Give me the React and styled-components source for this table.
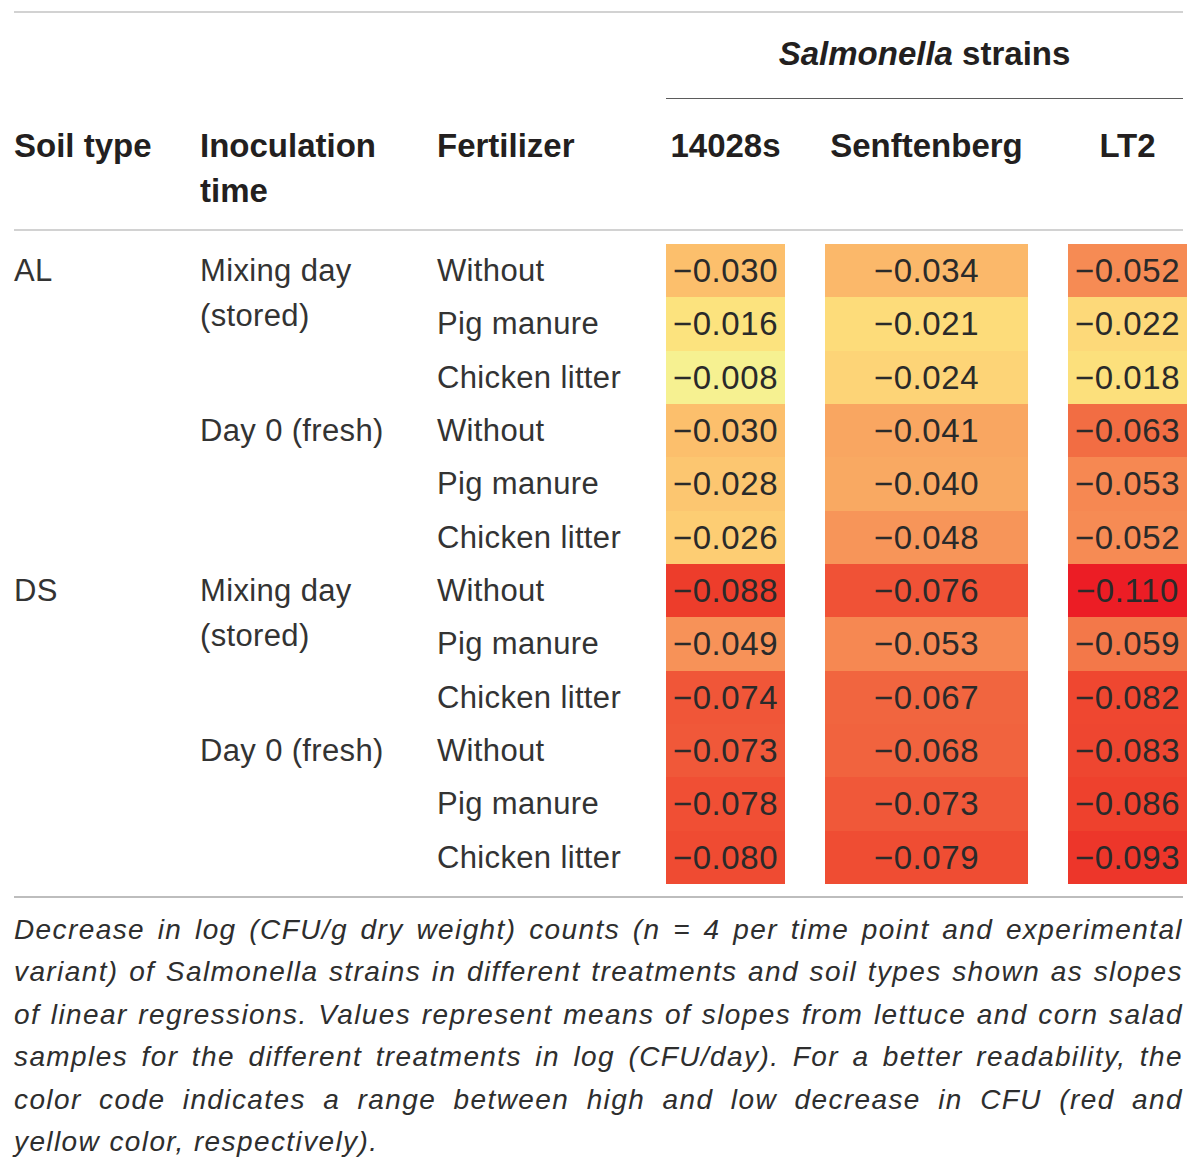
import React from 'react';
import styled, { createGlobalStyle } from 'styled-components';

/* ─────────────────────────────────────────────
   DATA
───────────────────────────────────────────── */
const strains = ['14028s', 'Senftenberg', 'LT2'];

const groups = [
  {
    soil: 'AL',
    times: [
      { label: ['Mixing day', '(stored)'], rows: [
        ['Without', [-0.030, -0.034, -0.052]],
        ['Pig manure', [-0.016, -0.021, -0.022]],
        ['Chicken litter', [-0.008, -0.024, -0.018]],
      ] },
      { label: ['Day 0 (fresh)'], rows: [
        ['Without', [-0.030, -0.041, -0.063]],
        ['Pig manure', [-0.028, -0.040, -0.053]],
        ['Chicken litter', [-0.026, -0.048, -0.052]],
      ] },
    ],
  },
  {
    soil: 'DS',
    times: [
      { label: ['Mixing day', '(stored)'], rows: [
        ['Without', [-0.088, -0.076, -0.110]],
        ['Pig manure', [-0.049, -0.053, -0.059]],
        ['Chicken litter', [-0.074, -0.067, -0.082]],
      ] },
      { label: ['Day 0 (fresh)'], rows: [
        ['Without', [-0.073, -0.068, -0.083]],
        ['Pig manure', [-0.078, -0.073, -0.086]],
        ['Chicken litter', [-0.080, -0.079, -0.093]],
      ] },
    ],
  },
];

const caption = [
  'Decrease in log (CFU/g dry weight) counts (n = 4 per time point and experimental',
  'variant) of Salmonella strains in different treatments and soil types shown as slopes',
  'of linear regressions. Values represent means of slopes from lettuce and corn salad',
  'samples for the different treatments in log (CFU/day). For a better readability, the',
  'color code indicates a range between high and low decrease in CFU (red and',
  'yellow color, respectively).',
];

/* yellow → orange → red scale, keyed on the size of the decrease */
const stops = [
  [0.008, [246, 241, 145]],
  [0.016, [252, 227, 126]],
  [0.021, [253, 220, 122]],
  [0.024, [253, 212, 119]],
  [0.030, [252, 191, 108]],
  [0.034, [251, 184, 106]],
  [0.041, [249, 166, 97]],
  [0.052, [246, 139, 84]],
  [0.063, [242, 109, 67]],
  [0.076, [240, 82, 54]],
  [0.088, [237, 61, 43]],
  [0.110, [236, 29, 37]],
];

const heat = (v) => {
  const a = Math.abs(v);
  if (a <= stops[0][0]) return `rgb(${stops[0][1].join(',')})`;
  for (let i = 1; i < stops.length; i++) {
    const [x1, c1] = stops[i];
    const [x0, c0] = stops[i - 1];
    if (a <= x1) {
      const t = (a - x0) / (x1 - x0);
      const c = c0.map((ch, k) => Math.round(ch + (c1[k] - ch) * t));
      return `rgb(${c.join(',')})`;
    }
  }
  return `rgb(${stops[stops.length - 1][1].join(',')})`;
};

const fmt = (v) => '\u2212' + Math.abs(v).toFixed(3);

/* ─────────────────────────────────────────────
   STYLES
───────────────────────────────────────────── */
const GlobalStyle = createGlobalStyle`
  body {
    margin: 0;
    background: #fff;
    font-family: "Liberation Sans", Arial, sans-serif;
    color: #231f20;
  }
`;

const COLS = '186px 237px 229px 119px 243px 159px';

const Page = styled.div`
  width: 1173px;
  padding: 11px 0 0 14px;
`;

const Rule = styled.div`
  height: 2px;
  margin-right: 4px;
  margin-top: ${p => p.$gap || 0}px;
  background: ${p => p.$tone || '#d2d2d2'};
`;

const HeadGrid = styled.div`
  display: grid;
  grid-template-columns: ${COLS};
  font-size: 33px;
  font-weight: 700;
  line-height: 45px;
`;

const GroupHead = styled.div`
  grid-column: 4 / 7;
  grid-row: 1;
  margin-right: 4px;
  padding: 18px 0 22px;
  text-align: center;
  border-bottom: 1px solid #5b5b5b;
  em { font-style: italic; }
`;

const ColHead = styled.div`
  grid-row: 2;
  grid-column: ${p => p.$col};
  padding: 24px 0 16px;
  text-align: ${p => (p.$center ? 'center' : 'left')};
  margin-left: ${p => (p.$offset ? '40px' : '0')};
`;

const BodyGrid = styled.div`
  display: grid;
  grid-template-columns: ${COLS};
  grid-template-rows: repeat(12, 53.34px);
  padding-top: 13px;
  font-size: 31px;
  letter-spacing: 0.35px;
  line-height: 45px;
  color: #333;
`;

const SpanLabel = styled.div`
  grid-column: ${p => p.$col};
  grid-row: span ${p => p.$span};
  padding-top: 4px;
`;

const Label = styled.div`
  grid-column: 3;
  padding-top: 4px;
  white-space: nowrap;
`;

const HeatCell = styled.div`
  grid-column: ${p => p.$col};
  margin-left: ${p => (p.$offset ? '40px' : '0')};
  display: flex;
  align-items: center;
  justify-content: center;
  background: ${p => heat(p.$value)};
  font-size: 33px;
  letter-spacing: 0.6px;
  color: #2a2a2a;
`;

const Caption = styled.div`
  width: 1169px;
  padding-top: 11px;
  font-size: 28px;
  letter-spacing: 1.4px;
  font-style: italic;
  line-height: 42.4px;
  color: #2e2e2e;
`;

const CaptionLine = styled.div`
  white-space: nowrap;
  text-align: justify;
  text-align-last: ${p => (p.$last ? 'left' : 'justify')};
`;

/* ─────────────────────────────────────────────
   COMPONENT
───────────────────────────────────────────── */
export default function App() {
  return (
    <Page>
      <GlobalStyle />
      <Rule />

      <HeadGrid>
        <GroupHead><em>Salmonella</em> strains</GroupHead>
        <ColHead $col={1}>Soil type</ColHead>
        <ColHead $col={2}>Inoculation<br />time</ColHead>
        <ColHead $col={3}>Fertilizer</ColHead>
        {strains.map((s, i) => (
          <ColHead key={s} $col={4 + i} $center $offset={i > 0}>{s}</ColHead>
        ))}
      </HeadGrid>

      <Rule />

      <BodyGrid>
        {groups.map(g => (
          <React.Fragment key={g.soil}>
            <SpanLabel $col={1} $span={6}>{g.soil}</SpanLabel>
            {g.times.map((t, ti) => (
              <React.Fragment key={ti}>
                <SpanLabel $col={2} $span={3}>
                  {t.label.map((l, li) => <div key={li}>{l}</div>)}
                </SpanLabel>
                {t.rows.map(([fert, vals], ri) => (
                  <React.Fragment key={ri}>
                    <Label>{fert}</Label>
                    {vals.map((v, vi) => (
                      <HeatCell key={vi} $col={4 + vi} $offset={vi > 0} $value={v}>
                        {fmt(v)}
                      </HeatCell>
                    ))}
                  </React.Fragment>
                ))}
              </React.Fragment>
            ))}
          </React.Fragment>
        ))}
      </BodyGrid>

      <Rule $tone="#bdbdbd" $gap={12} />

      <Caption>
        {caption.map((line, i) => (
          <CaptionLine key={i} $last={i === caption.length - 1}>{line}</CaptionLine>
        ))}
      </Caption>
    </Page>
  );
}
